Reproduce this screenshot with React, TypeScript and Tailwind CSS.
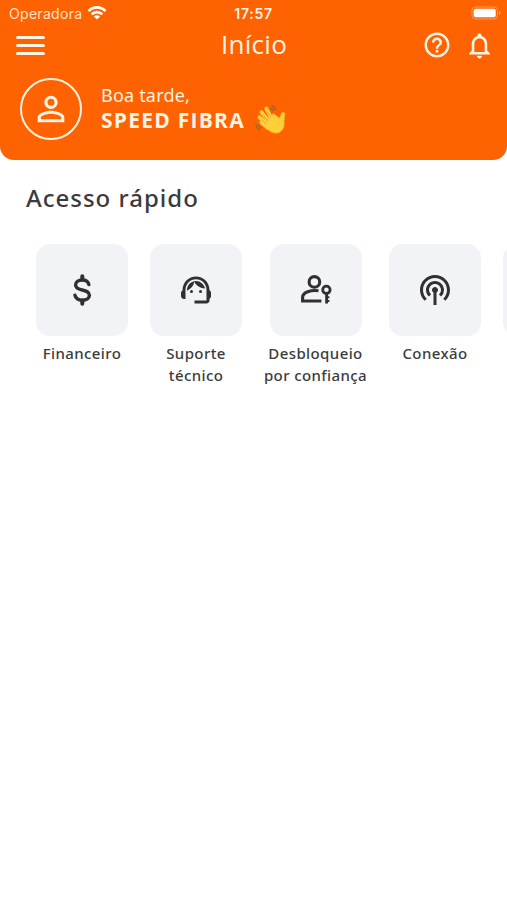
import type { ReactNode } from "react";
import {
  MdHelpOutline,
  MdNotificationsNone,
  MdPersonOutline,
  MdPodcasts,
  MdSupportAgent,
} from "react-icons/md";

function DollarIcon() {
  return (
    <svg width="36" height="36" viewBox="0 0 36 36" fill="none" stroke="currentColor" strokeWidth="3.4" strokeLinecap="round">
      <path d="M18.3 4.3v3.2M18.3 28.5v3.2" strokeWidth="4" />
      <path d="M24.9 12.6C24.1 9.4 21.7 8 18.3 8c-4 0-6.7 1.9-6.7 5 0 3.3 2.9 4.2 6.7 5 4 .9 7.1 1.8 7.1 5.3 0 3.1-2.9 4.9-7.1 4.9-3.8 0-6.6-1.6-7.4-5" />
    </svg>
  );
}

function PersonKeyIcon() {
  return (
    <svg width="36" height="36" viewBox="0 0 36 36" fill="none" stroke="currentColor" strokeWidth="3.1">
      <circle cx="16.4" cy="9.9" r="5.3" />
      <path d="M20.5 18.7c-7.5-1.1-15.9 1.7-15.9 6.6v3.7h18.8" />
      <circle cx="28.4" cy="17.8" r="3.7" strokeWidth="2.8" />
      <path d="M28.6 21.3v10.2" strokeWidth="2.8" />
      <path d="M29.4 25.3h2M29.4 29h2" strokeWidth="2" />
    </svg>
  );
}

function WifiIcon() {
  return (
    <svg width="20" height="16" viewBox="0 0 20 16" fill="none" stroke="currentColor" strokeWidth="2.7">
      <path d="M1.5 6.1c4.9-4.9 12.1-4.9 17 0M4.7 9.3c3-3 7.6-3 10.6 0" />
      <path d="M10 14.6 6.9 11.5c1.8-1.7 4.4-1.7 6.2 0z" fill="currentColor" stroke="none" />
    </svg>
  );
}

function BatteryIcon() {
  return (
    <svg width="31" height="14" viewBox="0 0 31 14">
      <rect x="1" y="1" width="25.5" height="12" rx="3.5" fill="none" stroke="#ff9a5c" strokeWidth="1" />
      <rect x="2.7" y="2.7" width="22" height="8.6" rx="1.8" fill="#fff" />
      <path d="M28 5c2 .7 2 3.3 0 4z" fill="#ffb184" />
    </svg>
  );
}

function WavingHand() {
  return (
    <svg width="32" height="32" viewBox="0 0 32 32" fill="none" strokeLinecap="round" strokeLinejoin="round">
      <g stroke="#f9b51e" strokeWidth="4">
        <path d="M17.5 16.5 11.2 4.6M15 19 6.4 8.2M13 21.5 4.2 13.2M12.5 24 6.2 18.6" />
      </g>
      <path d="M12.2 24.5c3.2 4.4 9.3 6.2 13.6 2.9 3.7-2.9 3.5-6.8 3.2-10.7l.9-6.3c.2-2.4-2.8-2.8-3.6-.7l-1.6 4.6-6.3-4.8-8.2 9.8z" fill="#ffcf38" stroke="#f9b51e" strokeWidth=".8" />
      <g stroke="#ffd043" strokeWidth="3">
        <path d="M18 16.5 11.4 4.6M16 19 6.7 8.2M14 21.5 4.6 13.2M13.5 24 6.6 18.7" />
      </g>
      <path d="M16 13 12.2 8M13.2 16.6 8.2 11M11.5 20 6.9 15.8" stroke="#e59b16" strokeWidth=".8" />
      <path d="M17 1.8c1.9.7 3.1 2 3.6 4M15.8 4.3c1 .4 1.7 1.2 2 2.4M1 20.5c.3 2.3 1.5 4.1 3.8 5.2M3.7 20.8c.3 1.1 1 2 2.1 2.6" stroke="#b06028" strokeWidth="1.6" />
    </svg>
  );
}

type Shortcut = { label: ReactNode; icon: ReactNode };

const shortcuts: Shortcut[] = [
  { label: "Financeiro", icon: <DollarIcon /> },
  { label: <>Suporte<br />técnico</>, icon: <MdSupportAgent size={36} /> },
  { label: <>Desbloqueio<br />por confiança</>, icon: <PersonKeyIcon /> },
  { label: "Conexão", icon: <MdPodcasts size={36} /> },
  { label: "", icon: null },
];

function StatusBar() {
  return (
    <div className="grid h-[26px] grid-cols-3 items-center pl-[9px] pr-[5px] font-['Inter',sans-serif] text-[14px]">
      <div className="flex items-center gap-[5px] text-[#ffe3cc]">
        <span className="tracking-[0.3px]">Operadora</span>
        <span className="text-white"><WifiIcon /></span>
      </div>
      <span className="pr-1 text-center font-semibold tracking-[0.7px]">17:57</span>
      <div className="flex justify-end"><BatteryIcon /></div>
    </div>
  );
}

export default function App() {
  return (
    <div className="h-[900px] w-[507px] overflow-hidden bg-white font-['Noto_Sans',sans-serif]">
      <header className="h-[159.5px] rounded-b-[14px] bg-[#ff6200] text-[#fff4e4]">
        <StatusBar />
        <div className="grid h-[38px] grid-cols-3 items-center pl-4 pr-3">
          <button className="flex w-[29px] flex-col gap-[5px]" aria-label="Menu">
            <span className="h-[3px] w-full rounded-full bg-current" />
            <span className="h-[3px] w-full rounded-full bg-current" />
            <span className="h-[3px] w-full rounded-full bg-current" />
          </button>
          <h1 className="pr-[3px] pb-[3px] text-center font-['Open_Sans',sans-serif] text-[26px] leading-8 font-normal tracking-[0.3px]">Início</h1>
          <div className="flex justify-end gap-3 pt-px">
            <MdHelpOutline size={30} />
            <MdNotificationsNone size={31} />
          </div>
        </div>
        <div className="flex items-center pt-[14px] pl-5">
          <div className="flex size-[62px] items-center justify-center rounded-full border-2 border-current">
            <MdPersonOutline size={40} />
          </div>
          <div className="ml-[19px] pb-[3px]">
            <p className="text-[18px] leading-6 tracking-[0.2px]">Boa tarde,</p>
            <div className="flex h-[26px] items-center gap-[10px]">
              <p className="font-['Open_Sans',sans-serif] text-[21px] leading-[26px] font-bold tracking-[1.25px]">SPEED FIBRA</p>
              <WavingHand />
            </div>
          </div>
        </div>
      </header>

      <main>
        <h2 className="mt-[22.5px] ml-[26px] text-[24px] leading-8 font-medium tracking-[1px] text-[#3b3b3b]">Acesso rápido</h2>
        <div className="mt-[30px] ml-9 flex gap-[22px]">
          {shortcuts.map((item, index) => (
            <div key={index} className={`flex shrink-0 flex-col items-center ${index === 2 ? "w-[103px]" : "w-[92px]"}`}>
              <div className="flex size-[92px] items-center justify-center rounded-[14px] bg-[#f1f3f6] text-[#303030]">
                {item.icon}
              </div>
              <p className="mt-[6px] text-center text-[15px] leading-[22px] font-medium tracking-[0.4px] whitespace-nowrap text-[#3b3b3b]">
                {item.label}
              </p>
            </div>
          ))}
        </div>
      </main>
    </div>
  );
}
